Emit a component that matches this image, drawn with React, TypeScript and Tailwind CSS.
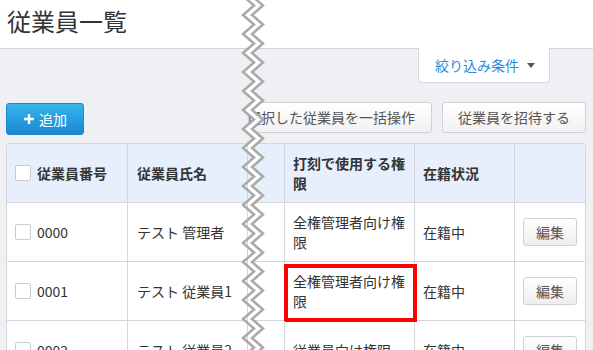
import React from "react";

const font = { fontFamily: '"Noto Sans CJK JP", "Noto Sans", sans-serif' };

const rows = [
  { no: "0000", name: "テスト 管理者", role: ["全権管理者向け権", "限"], marked: false },
  { no: "0001", name: "テスト 従業員1", role: ["全権管理者向け権", "限"], marked: true },
  { no: "0002", name: "テスト 従業員2", role: ["従業員向け権限"], marked: false },
];

function Checkbox() {
  return <span className="block w-[16px] h-[16px] shrink-0 bg-white border border-[#c9cbce] rounded-[2px]" />;
}

function GrayButton({ children, className = "" }: { children: React.ReactNode; className?: string }) {
  return (
    <button className={`h-[31px] flex items-center border border-[#cfd1d4] rounded-[3px] bg-gradient-to-b from-white to-[#f1f1f1] text-[14px] text-[#555] whitespace-nowrap ${className}`}>
      {children}
    </button>
  );
}

// zigzag tear drawn over the page where the screenshot was cut
function Tear() {
  const P = 19;
  const left = Array.from({ length: 42 }, (_, i) => [i % 2 ? 254 : 243, -4 + (i * P) / 2]);
  const right = left.map(([x, y]) => [x + 9, y]);
  const str = (p: number[][]) => p.map(([x, y]) => `${x},${y}`).join(" ");
  return (
    <svg className="absolute left-[236px] top-0" width="32" height="350" viewBox="236 0 32 350">
      <polygon points={str([...left, ...right.slice().reverse()])} fill="#fff" />
      <line x1="247.5" y1="141" x2="247.5" y2="350" stroke="#d3d7dc" strokeWidth="1" />
      <polyline points={str(left)} fill="none" stroke="#a9a9a9" strokeWidth="2.5" />
      <polyline points={str(right)} fill="none" stroke="#a9a9a9" strokeWidth="2.5" />
    </svg>
  );
}

export default function App() {
  return (
    <div className="relative w-[593px] h-[350px] overflow-hidden bg-[#eef0f3] text-[#333]" style={font}>
      <header className="h-[49px] bg-white border-b border-[#d0d3d7] pl-[7px] pt-[5px]">
        <h1 className="text-[24px] leading-[32px] text-[#333]">従業員一覧</h1>
      </header>

      <div className="flex justify-end pr-[43px]">
        <button className="-mt-px h-[35px] w-[132px] flex items-center pl-[16px] gap-[8px] bg-white border border-t-0 border-[#d5d8dc] rounded-b-[4px] text-[14px] text-[#2d8bd6]">
          絞り込み条件
          <span className="w-0 h-0 border-l-[4px] border-r-[4px] border-t-[5px] border-l-transparent border-r-transparent border-t-[#555]" />
        </button>
      </div>

      <div className="flex items-start mt-[19px] pl-[6px] pr-[7px]">
        <button className="mt-px h-[32px] w-[78px] flex items-center justify-center gap-[4px] rounded-[3px] border border-[#1d86cf] bg-gradient-to-b from-[#36b4e9] to-[#1c88d5] text-white text-[14px]">
          <svg width="12" height="12" viewBox="0 0 12 12">
            <path d="M6 1v10M1 6h10" stroke="#fff" strokeWidth="2.4" />
          </svg>
          追加
        </button>
        <div className="flex-1 flex justify-end gap-[10px]">
          <GrayButton className="w-[184px] justify-end overflow-hidden pr-[16px]">選択した従業員を一括操作</GrayButton>
          <GrayButton className="px-[15px]">従業員を招待する</GrayButton>
        </div>
      </div>

      <div className="mt-[8px] ml-[6px] w-[580px] border border-[#d3d7dc] rounded-t-[3px] bg-white text-[14px]">
        <div className="grid grid-cols-[120px_120px_37px_130px_100px_71px] h-[58px] bg-[#e6effb] font-bold rounded-t-[3px]">
          <div className="flex items-center gap-[6px] pl-[8px]">
            <Checkbox />
            従業員番号
          </div>
          <div className="flex items-center pl-[9px] border-l border-[#d3d7dc]">従業員氏名</div>
          <div className="border-l border-[#d3d7dc]" />
          <div className="flex items-center px-[8px] leading-[20px] border-l border-[#d3d7dc]">打刻で使用する権限</div>
          <div className="flex items-center pl-[8px] border-l border-[#d3d7dc]">在籍状況</div>
          <div className="border-l border-[#d3d7dc]" />
        </div>
        {rows.map((r) => (
          <div key={r.no} className="grid grid-cols-[120px_120px_37px_130px_100px_71px] h-[59px] border-t border-[#d3d7dc]">
            <div className="flex items-center gap-[6px] pl-[8px]">
              <Checkbox />
              {r.no}
            </div>
            <div className="flex items-center pl-[9px] border-l border-[#d3d7dc] whitespace-nowrap">{r.name}</div>
            <div className="border-l border-[#d3d7dc]" />
            <div className="relative flex flex-col justify-center px-[8px] leading-[20px] border-l border-[#d3d7dc]">
              {r.role.map((t) => (
                <span key={t}>{t}</span>
              ))}
              {r.marked && (
                <span className="absolute -left-px top-[2px] -right-[3px] -bottom-[2px] border-[4px] border-[#ff0000]" />
              )}
            </div>
            <div className="flex items-center pl-[8px] border-l border-[#d3d7dc]">在籍中</div>
            <div className="flex items-center justify-center border-l border-[#d3d7dc]">
              <button className="h-[28px] w-[54px] rounded-[3px] border border-[#cfd1d4] bg-gradient-to-b from-white to-[#eeeeee] text-[#555]">
                編集
              </button>
            </div>
          </div>
        ))}
      </div>

      <Tear />
    </div>
  );
}
